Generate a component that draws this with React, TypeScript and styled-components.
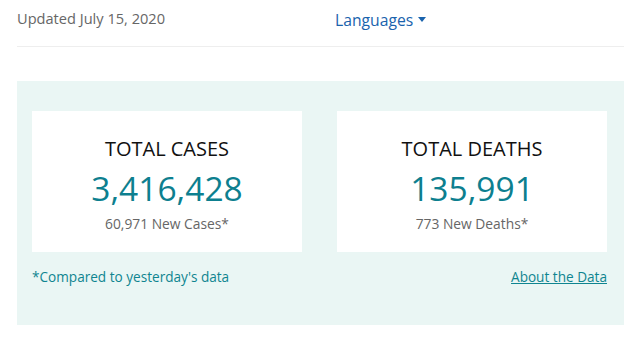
import React from 'react';
import styled, { createGlobalStyle } from 'styled-components';

const GlobalStyle = createGlobalStyle`
  html, body {
    margin: 0;
    padding: 0;
    background: #ffffff;
    font-family: 'Open Sans', 'Noto Sans', sans-serif;
  }
`;

interface Stat {
  title: string;
  total: string;
  change: string;
}

const stats: Stat[] = [
  { title: 'TOTAL CASES', total: '3,416,428', change: '60,971 New Cases*' },
  { title: 'TOTAL DEATHS', total: '135,991', change: '773 New Deaths*' },
];

const App = () => (
  <>
    <GlobalStyle />
    <Page>
      <TopBar>
        <Updated>Updated July 15, 2020</Updated>
        <LangButton>
          Languages
          <Caret />
        </LangButton>
      </TopBar>
      <Panel>
        <Cards>
          {stats.map((s) => (
            <Card key={s.title}>
              <CardTitle>{s.title}</CardTitle>
              <Total>{s.total}</Total>
              <Change>{s.change}</Change>
            </Card>
          ))}
        </Cards>
        <Footer>
          <Note>*Compared to yesterday's data</Note>
          <DataLink href="#">About the Data</DataLink>
        </Footer>
      </Panel>
    </Page>
  </>
);

const Page = styled.div`
  width: 607px;
  margin-left: 17px;
`;

const TopBar = styled.div`
  height: 47px;
  border-bottom: 1px solid #eeeeee;
  display: flex;
  align-items: flex-start;
  padding-top: 7px;
  box-sizing: border-box;
  margin-bottom: 34px;
`;

const Updated = styled.div`
  font-size: 14.6px;
  color: #666666;
  line-height: 22px;
  width: 318px;
`;

const LangButton = styled.div`
  display: flex;
  align-items: center;
  gap: 5px;
  font-size: 15.7px;
  color: #1a63ad;
  line-height: 24px;
  margin-top: 1px;
`;

const Caret = styled.span`
  width: 0;
  height: 0;
  border-left: 4.5px solid transparent;
  border-right: 4.5px solid transparent;
  border-top: 5px solid #1a63ad;
  margin-top: -2px;
`;

const Panel = styled.div`
  background: #eaf6f4;
  padding: 30px 17px 0 15px;
  height: 244px;
  box-sizing: border-box;
`;

const Cards = styled.div`
  display: grid;
  grid-template-columns: 270px 270px;
  column-gap: 35px;
`;

const Card = styled.div`
  background: #ffffff;
  height: 141px;
  display: flex;
  flex-direction: column;
  align-items: center;
  padding-top: 25px;
  box-sizing: border-box;
`;

const CardTitle = styled.div`
  font-size: 20px;
  color: #111111;
  line-height: 26px;
`;

const Total = styled.div`
  font-size: 33.5px;
  color: #0d7f8f;
  line-height: 44px;
  margin-top: 4px;
`;

const Change = styled.div`
  font-size: 13.8px;
  color: #666666;
  line-height: 20px;
  margin-top: 4px;
`;

const Footer = styled.div`
  display: flex;
  justify-content: space-between;
  align-items: center;
  margin-top: 15px;
  font-size: 13.6px;
  line-height: 20px;
`;

const Note = styled.span`
  color: #0f8590;
`;

const DataLink = styled.a`
  color: #0f8590;
  text-decoration: underline;
`;

export default App;
